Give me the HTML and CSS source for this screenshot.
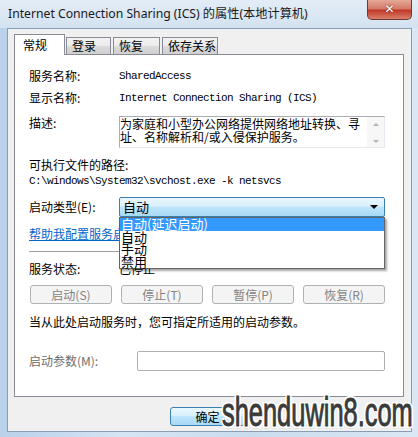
FILE: index.html
```html
<!DOCTYPE html>
<html lang="zh-CN">
<head>
    <meta charset="UTF-8">
    <title>Internet Connection Sharing (ICS) 的属性(本地计算机)</title>
    <link rel="stylesheet" href="styles.css">
</head>
<body>
    <div class="window">
        <div class="titlebar">
            <span class="title">Internet Connection Sharing (ICS) 的属性(本地计算机)</span>
            <div class="close">&#x2715;</div>
        </div>

        <div class="client">
            <div class="tabs">
                <div class="tab active">常规</div>
                <div class="tab w-login">登录</div>
                <div class="tab w-recover">恢复</div>
                <div class="tab w-deps">依存关系</div>
            </div>

            <div class="panel">
                <div class="row first">
                    <span class="label">服务名称:</span>
                    <span class="mono">SharedAccess</span>
                </div>
                <div class="row">
                    <span class="label">显示名称:</span>
                    <span class="mono">Internet Connection Sharing (ICS)</span>
                </div>
                <div class="row desc-row">
                    <span class="label desc-label">描述:</span>
                    <div class="desc-box">
                        <div class="desc-text">为家庭和小型办公网络提供网络地址转换、寻址、名称解析和/或入侵保护服务。</div>
                        <div class="scrollbar">
                            <span class="arrow up"></span>
                            <span class="arrow down"></span>
                        </div>
                    </div>
                </div>

                <div class="path-label">可执行文件的路径:</div>
                <div class="mono path">C:\windows\System32\svchost.exe -k netsvcs</div>

                <div class="row combo-row">
                    <span class="label">启动类型(E):</span>
                    <div class="combo">
                        <span>自动</span>
                        <span class="combo-arrow"></span>
                        <ul class="dropdown">
                            <li class="selected">自动(延迟启动)</li>
                            <li>自动</li>
                            <li>手动</li>
                            <li>禁用</li>
                        </ul>
                    </div>
                </div>

                <a class="help" href="#">帮助我配置服务启动选项。</a>
                <div class="separator"></div>

                <div class="row status-row">
                    <span class="label">服务状态:</span>
                    <span>已停止</span>
                </div>

                <div class="actions">
                    <button disabled>启动(S)</button>
                    <button disabled>停止(T)</button>
                    <button disabled>暂停(P)</button>
                    <button disabled>恢复(R)</button>
                </div>

                <div class="hint">当从此处启动服务时，您可指定所适用的启动参数。</div>

                <div class="row params-row">
                    <span class="label params-label">启动参数(M):</span>
                    <input class="params" type="text" disabled>
                </div>
            </div>

            <div class="footer">
                <button class="default">确定</button>
            </div>
        </div>

        <div class="watermark">shenduwin8.com</div>
    </div>
</body>
</html>
```

FILE: styles.css
```css
body {
    margin: 0;
    font-family: "Noto Sans CJK SC", sans-serif;
    font-size: 12px;
    color: #000;
}
.window {
    position: relative;
    width: 418px;
    height: 437px;
    overflow: hidden;
    background: linear-gradient(90deg, #b9d1ea 0%, #d6e5f4 30%, #c9dcef 60%, #dbe7f4 100%);
}
.titlebar {
    height: 28px;
    display: flex;
    align-items: flex-start;
    background: linear-gradient(180deg, #e3ecf6 0%, #d3e2f1 100%);
}
.title {
    font-family: "Noto Sans", "Noto Sans CJK SC", sans-serif;
    font-size: 12.2px;
    margin: 4px 0 0 8px;
    color: #1a1a1a;
    white-space: nowrap;
}
.close {
    margin-left: auto;
    margin-right: 6px;
    width: 43px;
    height: 19px;
    border: 1px solid #6d3a36;
    border-top: none;
    border-radius: 0 0 5px 5px;
    background: linear-gradient(180deg, #e6a898 0%, #d47a68 45%, #c0392b 55%, #d9806a 100%);
    color: #fff;
    font-family: "DejaVu Sans", sans-serif;
    font-weight: bold;
    font-size: 12px;
    text-align: center;
    line-height: 18px;
    text-shadow: 0 0 2px #5a1a10;
}
.client {
    margin: 0 6px 0 7px;
    padding: 5px 8px 0 6px;
    background: #f0f0f0;
    border: 1px solid #8b9db3;
    box-sizing: border-box;
    height: 404px;
}
.tabs {
    display: flex;
    align-items: flex-end;
    height: 20px;
    position: relative;
    z-index: 1;
}
.tab {
    height: 17px;
    box-sizing: border-box;
    padding-left: 5px;
    line-height: 16px;
    font-size: 12px;
    border: 1px solid #898c95;
    border-bottom: none;
    margin-left: 1px;
    background: linear-gradient(180deg, #f3f3f3 0%, #ebebeb 50%, #dcdcdc 51%, #cfcfcf 100%);
}
.tab.active {
    height: 21px;
    width: 51px;
    margin: 0 0 -1px 0;
    padding-left: 8px;
    line-height: 19px;
    background: #fff;
}
.w-login { width: 45px; }
.w-recover { width: 47px; margin-left: 2px; }
.w-deps { width: 56px; margin-left: 2px; }
.panel {
    width: 390px;
    height: 343px;
    box-sizing: border-box;
    background: #fff;
    border: 1px solid #898c95;
    padding: 13px 18px 0 14px;
}
.row {
    display: flex;
    align-items: center;
    line-height: 16px;
}
.row + .row {
    margin-top: 6px;
}
.label {
    width: 90px;
    flex: none;
}
.mono {
    font-family: "Liberation Mono", monospace;
    font-size: 11px;
    letter-spacing: -0.6px;
    white-space: nowrap;
}
.desc-row {
    align-items: flex-start;
}
.row.desc-row {
    margin-top: 10px;
}
.desc-label {
    line-height: 13px;
}
.desc-box {
    flex: 1;
    height: 32px;
    box-sizing: border-box;
    display: flex;
    border: 1px solid #e3e9ef;
    border-top-color: #abadb3;
    border-left-color: #abadb3;
}
.desc-text {
    flex: 1;
    line-height: 12.5px;
    padding-top: 1px;
}
.scrollbar {
    width: 17px;
    background: #f7f7f7;
    display: flex;
    flex-direction: column;
    align-items: center;
    justify-content: space-between;
    padding: 6px 0 4px;
    box-sizing: border-box;
}
.arrow {
    width: 0;
    height: 0;
    border-left: 3px solid transparent;
    border-right: 3px solid transparent;
}
.arrow.up {
    border-bottom: 3px solid #b4b4b4;
}
.arrow.down {
    border-top: 3px solid #b4b4b4;
}
.path-label {
    margin-top: 9px;
    line-height: 16px;
}
.path {
    line-height: 16px;
}
.row.combo-row {
    margin-top: 8px;
}
.combo {
    position: relative;
    flex: 1;
    height: 20px;
    box-sizing: border-box;
    border: 1px solid #3c7fb1;
    border-radius: 2px;
    background: linear-gradient(180deg, #eaf6fd 0%, #d9f0fc 45%, #bee6fd 50%, #a7d9f5 100%);
    padding-left: 3px;
    display: flex;
    align-items: center;
    font-size: 13px;
}
.combo-arrow {
    margin-left: auto;
    margin-right: 6px;
    width: 0;
    height: 0;
    border-left: 4px solid transparent;
    border-right: 4px solid transparent;
    border-top: 4px solid #000;
}
.dropdown {
    position: absolute;
    left: -1px;
    right: -1px;
    top: 19px;
    margin: 0;
    padding: 0;
    list-style: none;
    background: #fff;
    border: 1px solid #646464;
    box-shadow: 2px 2px 2px rgba(0, 0, 0, 0.35);
    z-index: 2;
}
.dropdown li {
    line-height: 12.5px;
    height: 12.5px;
    padding-left: 1px;
    font-size: 13px;
}
.dropdown li.selected {
    background: #3399ff;
    color: #fff;
}
.help {
    display: block;
    margin-top: 9px;
    line-height: 16px;
    color: #0066cc;
    text-decoration: underline;
}
.separator {
    margin: 9px 0 0;
    border-top: 1px solid #a0a0a0;
    border-bottom: 1px solid #fff;
}
.row.status-row {
    margin-top: 8px;
}
.actions {
    margin-top: 8px;
    display: grid;
    grid-template-columns: repeat(4, 1fr);
    gap: 9px;
    padding-left: 1px;
}
button {
    height: 19px;
    padding: 0;
    font-family: "Noto Sans CJK SC", sans-serif;
    font-size: 12px;
    line-height: 17px;
    border: 1px solid #707070;
    border-radius: 3px;
    background: linear-gradient(180deg, #f2f2f2 0%, #ebebeb 45%, #dddddd 50%, #cfcfcf 100%);
    color: #000;
}
button:disabled {
    border-color: #adb2b5;
    background: #f4f4f4;
    color: #838383;
}
.hint {
    margin-top: 10px;
    line-height: 16px;
}
.row.params-row {
    margin-top: 21px;
}
.params-label {
    width: 108px;
    color: #6d6d6d;
}
.params {
    flex: 1;
    height: 20px;
    box-sizing: border-box;
    border: 1px solid #afafaf;
    border-radius: 2px;
    background: #fff;
}
.footer {
    display: flex;
    margin-top: 10px;
    padding-left: 156px;
}
.footer button {
    width: 75px;
}
.footer .default {
    border-color: #3c7fb1;
    background: linear-gradient(180deg, #eaf6fd 0%, #d9f0fc 45%, #bee6fd 50%, #a7d9f5 100%);
}
.watermark {
    position: absolute;
    left: 222px;
    top: 389px;
    font-family: "Liberation Sans", sans-serif;
    font-size: 41px;
    color: #3a3a3a;
    white-space: nowrap;
    transform: scaleX(0.62);
    transform-origin: left top;
    -webkit-text-stroke: 1px #3a3a3a;
    text-shadow: 2px 2px 0 #fff, -2px -2px 0 #fff, 2px -2px 0 #fff, -2px 2px 0 #fff, 3px 0 0 #fff, -3px 0 0 #fff, 0 3px 0 #e0e0e0;
    z-index: 5;
}
```
